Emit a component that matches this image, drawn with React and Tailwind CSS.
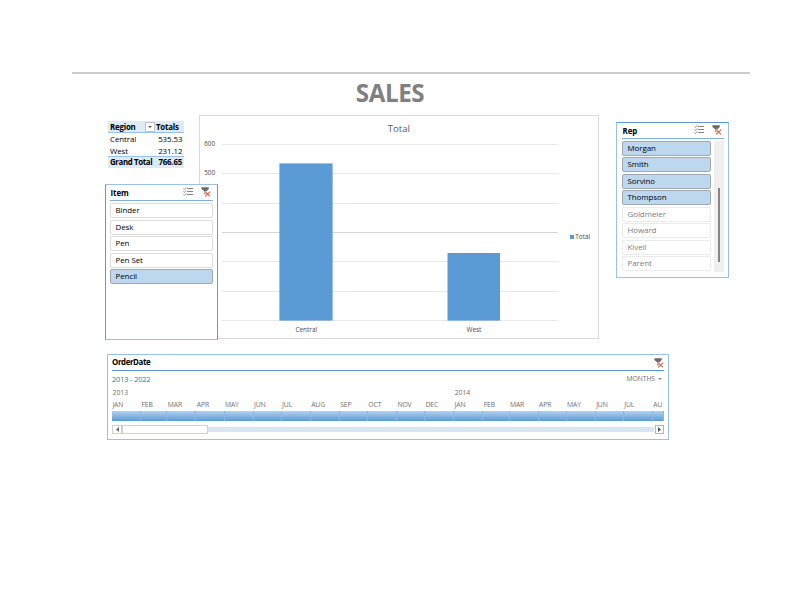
import { clsx } from 'clsx'

const totals = [
  { region: 'Central', total: '535.53' },
  { region: 'West', total: '231.12' }
]

const items = [
  { name: 'Binder' },
  { name: 'Desk' },
  { name: 'Pen' },
  { name: 'Pen Set' },
  { name: 'Pencil', selected: true }
]

const reps = [
  { name: 'Morgan', selected: true },
  { name: 'Smith', selected: true },
  { name: 'Sorvino', selected: true },
  { name: 'Thompson', selected: true },
  { name: 'Goldmeier', muted: true },
  { name: 'Howard', muted: true },
  { name: 'Kivell', muted: true },
  { name: 'Parent', muted: true }
]

// Each month is as wide as its number of days
const DAY_WIDTH = 0.9375
const months = [
  ['JAN', 31, '2013'], ['FEB', 28], ['MAR', 31], ['APR', 30], ['MAY', 31], ['JUN', 30],
  ['JUL', 31], ['AUG', 31], ['SEP', 30], ['OCT', 31], ['NOV', 30], ['DEC', 31],
  ['JAN', 31, '2014'], ['FEB', 28], ['MAR', 31], ['APR', 30], ['MAY', 31], ['JUN', 30],
  ['JUL', 31], ['AU', 12]
]

const MultiSelectIcon = () => (
  <svg width="10" height="10" viewBox="0 0 10 10" fill="none" stroke="#858585">
    <path d="M4 1.5h6M4 4.5h6M4 7.5h6" />
    <path d="M0.4 1.6l1 0.9L3.2 0.4M0.4 4.6l1 0.9L3.2 3.4M0.4 7.6l1 0.9L3.2 6.4" strokeWidth="0.9" />
  </svg>
)

const ClearFilterIcon = () => (
  <svg width="10" height="10" viewBox="0 0 10 10" fill="none">
    <path d="M0.4 0.3h7.4v1.6L5.4 4.2v4.2L3.2 7V4.2L0.4 1.9z" fill="#6b6b6b" />
    <path d="M3.9 4.5l4.9 4.8M9.3 4.4L3.9 9.3" stroke="#fff" strokeWidth="2.2" />
    <path d="M4.2 4.7l4.8 4.7M9.2 4.6L4.2 9.4" stroke="#e0603f" strokeWidth="1.1" />
  </svg>
)

const PivotTable = () => (
  <div className="ml-[3px] w-[76px] text-[7.9px] leading-[12px] tracking-[-0.05px] text-black">
    <div className="flex h-[12px] items-center border-b border-[#9bc2e6] bg-[#ddebf7] pl-[2px] font-bold tracking-[-0.2px]">
      <span className="w-[35px] pt-px">Region</span>
      <span className="flex h-[10px] w-[10px] items-center justify-center border border-[#bfc4ca] bg-white">
        <svg width="4" height="2" viewBox="0 0 4 2"><path d="M0 0h4L2 2z" fill="#555" /></svg>
      </span>
      <span className="ml-px pt-px">Totals</span>
    </div>
    {totals.map((row) => (
      <div key={row.region} className="flex h-[12px] justify-between pr-[1.5px] pl-[2px]">
        <span>{row.region}</span>
        <span>{row.total}</span>
      </div>
    ))}
    <div className="-mt-px flex h-[12px] justify-between border-t border-[#9bc2e6] bg-[#ddebf7] pr-[2px] pl-[2px] leading-[11px] font-bold tracking-[-0.38px]">
      <span>Grand Total</span>
      <span className="tracking-[-0.2px]">766.65</span>
    </div>
  </div>
)

const SlicerHeader = ({ title }) => (
  <div className="flex h-[16px] items-center border-b border-[#7fb0de] text-[7.9px] font-bold tracking-[-0.05px] text-black">
    <span className="flex-1 pt-[2px] pl-[0.5px]">{title}</span>
    <span className="mb-px"><MultiSelectIcon /></span>
    <span className="mb-px ml-[8px]"><ClearFilterIcon /></span>
    <span className="w-[2px]" />
  </div>
)

const SlicerButton = ({ name, selected, muted }) => (
  <div
    className={clsx(
      'flex h-[15px] items-center rounded-[2px] border pl-[4.5px] text-[7.9px] leading-[13px] tracking-[-0.04px]',
      selected && 'border-[#a0a8b0] bg-[#bdd7ee] text-black',
      muted && 'border-[#ebebeb] bg-white text-[#7c7c7c]',
      !selected && !muted && 'border-[#dcdcdc] bg-white text-black'
    )}
  >
    {name}
  </div>
)

const ItemSlicer = () => (
  <div className="relative z-10 mt-[16px] h-[156px] w-[113px] border border-[#5b9bd5] border-y-[#9bc2e6] bg-white pr-[4px] pl-[4px]">
    <SlicerHeader title="Item" />
    <div className="mt-[2.4px] flex flex-col gap-[1.4px]">
      {items.map((item) => <SlicerButton key={item.name} {...item} />)}
    </div>
  </div>
)

const RepSlicer = () => (
  <div className="mt-[7px] ml-[17px] h-[156px] w-[113px] border border-[#9bc2e6] border-t-[#5b9bd5] bg-white pr-[4px] pl-[5px]">
    <SlicerHeader title="Rep" />
    <div className="mt-[2px] flex justify-between">
      <div className="flex w-[89px] flex-col gap-[1.45px]">
        {reps.map((rep) => <SlicerButton key={rep.name} {...rep} />)}
      </div>
      <div className="h-[131px] w-[10px] bg-[#efefef] pt-[47px]">
        <div className="mx-auto h-[74px] w-[2px] bg-[#868686]" />
      </div>
    </div>
  </div>
)

const Chart = () => (
  <svg className="block" width="400" height="224" viewBox="0 0 400 224" fontFamily="'Open Sans', sans-serif">
    <rect x="0.5" y="0.5" width="399" height="223" fill="#fff" stroke="#d9d9d9" />
    {[29, 58, 88, 117, 146, 176, 205].map((y) => (
      <rect key={y} x="23" y={y} width="336" height="1" fill={y === 117 ? '#d6d6d6' : '#e8e8e8'} />
    ))}
    <rect x="80.4" y="48.4" width="53.2" height="157.2" fill="#5b9bd5" />
    <rect x="248.5" y="138" width="52.5" height="67.6" fill="#5b9bd5" />
    <text x="199.8" y="16.5" textAnchor="middle" fontSize="9.6" fill="#606060">Total</text>
    <g fontSize="6.4" fill="#484848">
      <text x="5.2" y="31">600</text>
      <text x="5.2" y="60.3">500</text>
      <text x="107.3" y="216.7" textAnchor="middle">Central</text>
      <text x="275" y="216.7" textAnchor="middle">West</text>
      <text x="376.3" y="124">Total</text>
    </g>
    <rect x="371" y="120" width="4" height="4" fill="#5b9bd5" />
  </svg>
)

const Timeline = () => (
  <div className="mt-[14px] ml-[107px] h-[86px] w-[562px] border border-[#9bc2e6] bg-white px-[4px] text-[6.8px] text-[#707070]">
    <div className="flex h-[16px] items-center justify-between border-b border-[#5b9bd5] text-[7.9px] font-bold tracking-[-0.4px] text-black">
      <span className="pt-px">OrderDate</span>
      <ClearFilterIcon />
    </div>
    <div className="flex h-[15px] items-center justify-between pt-px">
      <span className="text-[7.3px] tracking-[-0.1px] text-[#2e75b6]">2013 - 2022</span>
      <span className="flex items-center gap-[3px] pr-[2px] tracking-[-0.1px]">
        MONTHS
        <svg width="4" height="2" viewBox="0 0 4 2"><path d="M0 0h4L2 2z" fill="#8a8a8a" /></svg>
      </span>
    </div>
    <div className="flex w-[552px] overflow-hidden">
      {months.map(([name, days, year], i) => (
        <div key={i} className="shrink-0" style={{ width: days * DAY_WIDTH }}>
          <div className="h-[12px] pl-[0.5px] text-[6.8px] leading-[13px]">{year}</div>
          <div className="h-[13px] pl-[0.4px] leading-[13px] tracking-[-0.1px]">{name}</div>
          <div className="h-[10px] border-r border-[#8bb9e3] bg-linear-to-b from-[#b5d2ed] to-[#5b9bd5]" />
        </div>
      ))}
    </div>
    <div className="mt-[4px] flex h-[9px] items-center">
      <span className="flex h-[9px] w-[10px] items-center justify-center border border-[#d0d0d0]">
        <svg width="3" height="5" viewBox="0 0 3 5"><path d="M3 0v5L0 2.5z" fill="#666" /></svg>
      </span>
      <span className="h-[9px] w-[86px] border border-[#d0d0d0] bg-white" />
      <span className="h-[5px] flex-1 bg-[#d9e7f4]" />
      <span className="ml-px flex h-[9px] w-[9px] items-center justify-center border border-[#b4b4b4]">
        <svg width="3" height="5" viewBox="0 0 3 5"><path d="M0 0v5L3 2.5z" fill="#555" /></svg>
      </span>
    </div>
  </div>
)

export default function App() {
  return (
    <div className="h-[612px] w-[792px] overflow-hidden bg-white pt-[72px] font-['Open_Sans',sans-serif]">
      <div className="ml-[72px] h-[2px] w-[678px] bg-[#cbcbcb]" />
      <h1 className="h-[41px] pr-[12px] text-center text-[24.2px] leading-[37px] font-bold tracking-[-0.4px] text-[#808080]">
        SALES
      </h1>
      <div className="flex h-[225px] items-start pl-[105px]">
        <div className="w-[94px] pt-[6px]">
          <PivotTable />
          <ItemSlicer />
        </div>
        <Chart />
        <RepSlicer />
      </div>
      <Timeline />
    </div>
  )
}
